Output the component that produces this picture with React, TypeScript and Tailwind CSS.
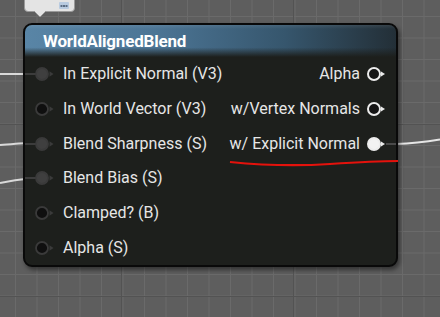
import { type FC } from 'react'

interface PinRow {
  left: string
  leftLinked: boolean
  right?: string
  rightFilled?: boolean
}

const rows: PinRow[] = [
  { left: 'In Explicit Normal (V3)', leftLinked: true, right: 'Alpha' },
  { left: 'In World Vector (V3)', leftLinked: false, right: 'w/Vertex Normals' },
  { left: 'Blend Sharpness (S)', leftLinked: true, right: 'w/ Explicit Normal', rightFilled: true },
  { left: 'Blend Bias (S)', leftLinked: true },
  { left: 'Clamped? (B)', leftLinked: false },
  { left: 'Alpha (S)', leftLinked: false },
]

const InputPin: FC<{ linked: boolean }> = ({ linked }) => (
  <svg width="31" height="16" viewBox="0 0 31 16" className="shrink-0">
    {linked && <line x1="0" y1="8" x2="11" y2="8" stroke="#3c3c3c" strokeWidth="2" />}
    <circle cx="17" cy="8" r="6" fill={linked ? '#3f3f3f' : '#0f0f0f'} stroke="#3a3a3a" strokeWidth="1.8" />
    <path d="M24.5 5.2 L28.5 8 L24.5 10.8 Z" fill="#3a3a3a" />
  </svg>
)

const OutputPin: FC<{ filled?: boolean }> = ({ filled }) => (
  <svg width="30" height="16" viewBox="0 0 30 16" className="shrink-0">
    {filled && <line x1="20" y1="8" x2="30" y2="8" stroke="#4a4a4a" strokeWidth="2" />}
    <circle cx="8" cy="8" r="6" fill={filled ? '#f2f2f2' : '#151515'} stroke="#ececec" strokeWidth="2" />
    <path d="M15 5.4 L19 8 L15 10.6 Z" fill="#ececec" />
  </svg>
)

const App: FC = () => {
  return (
    <div
      className="relative w-[440px] h-[317px] overflow-hidden bg-[#5e5e5e] bg-[linear-gradient(to_right,#535353_1px,transparent_1px),linear-gradient(to_bottom,#535353_1px,transparent_1px),linear-gradient(to_right,#6a6a6a_1px,transparent_1px),linear-gradient(to_bottom,#6a6a6a_1px,transparent_1px)] bg-[length:172px_172px,172px_172px,21.5px_21.5px,21.5px_21.5px] bg-[position:121px_124px,121px_124px,15px_16px,15px_16px] font-['Roboto','Liberation_Sans',sans-serif]"
    >
      {/* comment bubble */}
      <div className="absolute left-[24px] top-[-6px] w-[51px] h-[18px] rounded-[4px] bg-[#e4e4e4] border border-[#9a9a9a]">
        <svg width="10" height="7" viewBox="0 0 10 7" className="absolute right-[5px] bottom-[2px]">
          <rect x="0" y="0" width="10" height="7" rx="1" fill="#b9cbe0" />
          <rect x="1.5" y="3" width="2" height="2" fill="#5b6d83" />
          <rect x="4" y="3" width="2" height="2" fill="#5b6d83" />
          <rect x="6.5" y="3" width="2" height="2" fill="#5b6d83" />
        </svg>
      </div>
      <svg width="12" height="7" viewBox="0 0 12 7" className="absolute left-[34px] top-[11px]">
        <path d="M0 0 L6 6 L12 0 Z" fill="#e4e4e4" />
        <path d="M0 0 L6 6 L12 0" fill="none" stroke="#9a9a9a" strokeWidth="1" />
      </svg>

      {/* wires */}
      <svg width="440" height="317" className="absolute left-0 top-0">
        <path d="M0 74 L26 74" stroke="#d9d9d9" strokeWidth="2" fill="none" />
        <path d="M0 145 C10 144.5 18 143.5 26 143" stroke="#d9d9d9" strokeWidth="2" fill="none" />
        <path d="M0 183 C10 181 18 179.5 26 179" stroke="#d9d9d9" strokeWidth="2" fill="none" />
        <path d="M396 144 C412 143.5 428 141.5 440 139.5" stroke="#e6e6e6" strokeWidth="2" fill="none" />
      </svg>

      {/* node */}
      <div className="absolute left-[23px] top-[23px] w-[375px] h-[244px] flex flex-col rounded-[9px] border-2 border-[#090909] bg-[#1d1f1c] overflow-hidden shadow-[2px_3px_4px_rgba(0,0,0,0.45)]">
        <div className="h-[32px] shrink-0 flex items-center pl-[18px] bg-[linear-gradient(to_bottom,rgba(255,255,255,0.08)_0px,transparent_4px,transparent_70%,#1d1f1c_100%),linear-gradient(to_right,#5985a6_0%,#4c7595_35%,#36566d_70%,#232f37_100%)]">
          <span className="text-[17px] font-bold text-white tracking-[-0.2px] leading-none">WorldAlignedBlend</span>
        </div>
        <div className="flex-1 grid grid-rows-6">
          {rows.map((r) => (
            <div key={r.left} className="flex items-center justify-between">
              <div className="flex items-center gap-[7px]">
                <InputPin linked={r.leftLinked} />
                <span className="text-[16px] text-[#e6e6e6] leading-none">{r.left}</span>
              </div>
              {r.right && (
                <div className="flex items-center gap-[6px]">
                  <span className="text-[16px] text-[#e6e6e6] leading-none">{r.right}</span>
                  <OutputPin filled={r.rightFilled} />
                </div>
              )}
            </div>
          ))}
        </div>
      </div>

      {/* red annotation */}
      <svg width="440" height="317" className="absolute left-0 top-0 pointer-events-none">
        <path d="M230 162 C260 165 300 166 330 164 C360 162 385 161 398 161" stroke="#e4120c" strokeWidth="2.2" fill="none" />
      </svg>
    </div>
  )
}

export default App
